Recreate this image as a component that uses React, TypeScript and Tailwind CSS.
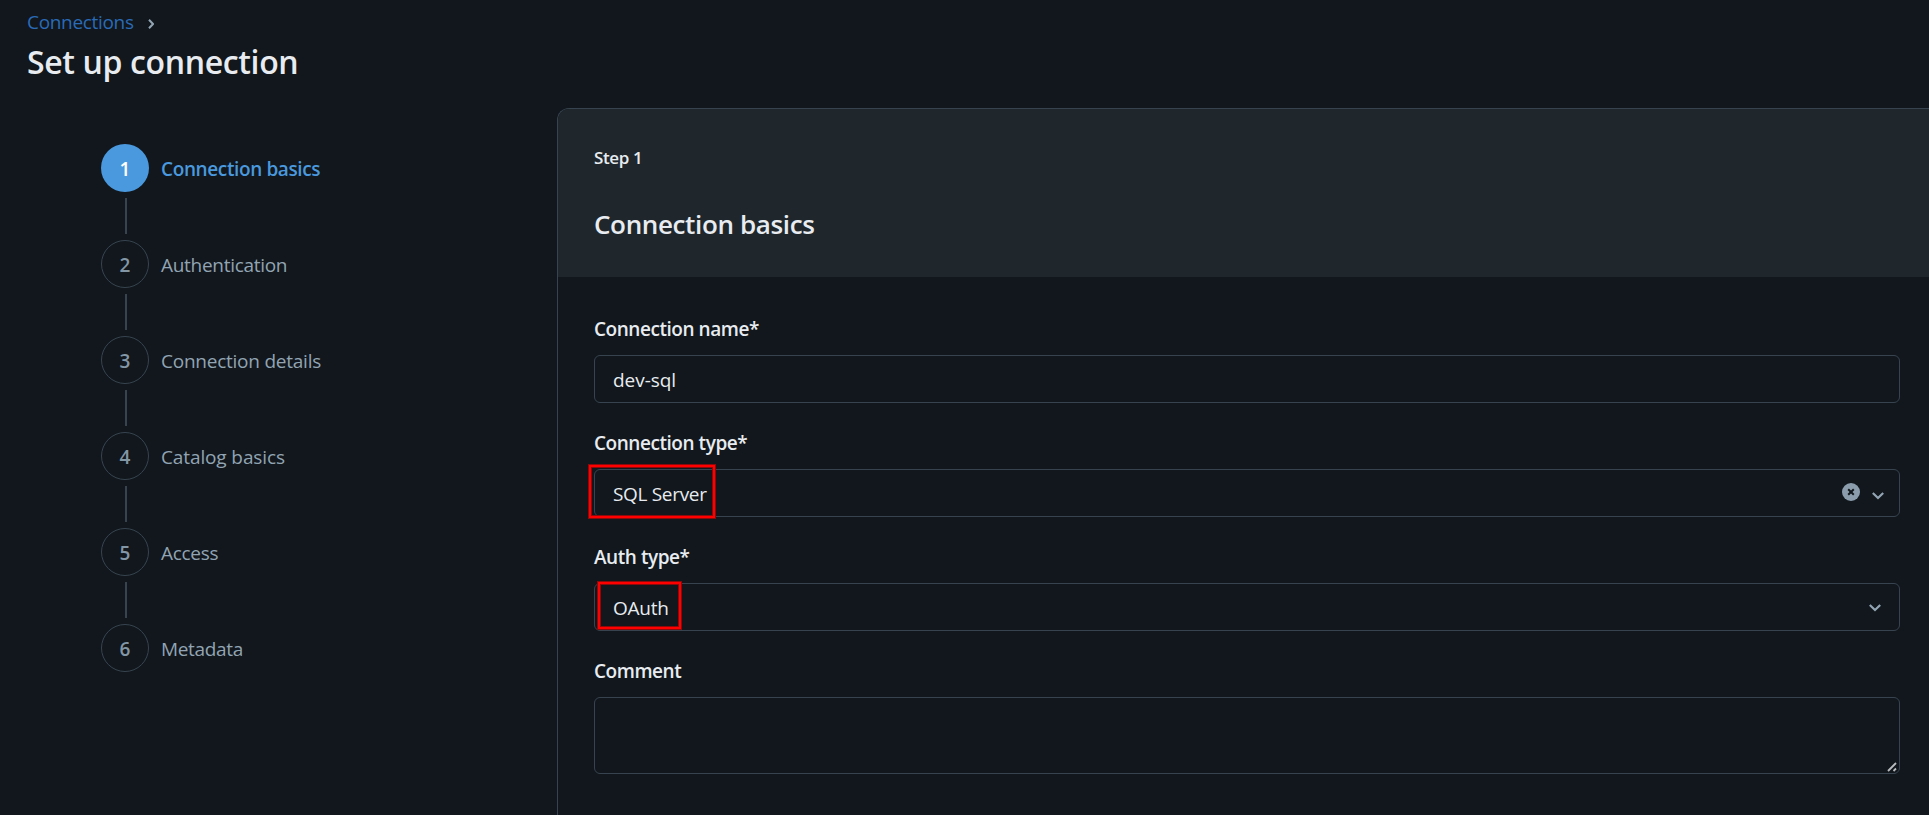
const steps = [
  { label: 'Connection basics', cls: 'tracking-[-0.38px]' },
  { label: 'Authentication', cls: 'tracking-[-0.29px]' },
  { label: 'Connection details', cls: 'tracking-[-0.24px]' },
  { label: 'Catalog basics', cls: 'tracking-[-0.12px]' },
  { label: 'Access', cls: 'tracking-[-0.3px]' },
  { label: 'Metadata', cls: 'tracking-[-0.32px]' },
];

function Chevron({ className }: { className: string }) {
  return (
    <svg className={className} viewBox="0 0 12 8" fill="none" stroke="#92a4b3" strokeWidth="2.2">
      <path d="M0.8 1 L6 6 L11.2 1" />
    </svg>
  );
}

function Stepper() {
  return (
    <nav className="flex w-[557px] shrink-0 flex-col pt-9 pl-[101px]">
      {steps.map((s, i) => (
        <div key={s.label} className="flex flex-col">
          <div className="flex h-12 items-center gap-3">
            <span
              className={
                i === 0
                  ? 'flex size-12 items-center justify-center rounded-full bg-[#4a99de] pt-[3px] text-[19px] font-semibold text-white'
                  : 'flex size-12 items-center justify-center rounded-full border border-[#37444f] pt-[3px] text-[19px] font-semibold text-[#8396a5]'
              }
            >
              {i + 1}
            </span>
            <span
              className={
                (i === 0 ? 'pt-[3px] text-[19px] font-semibold text-[#4a99de] ' : 'pt-[3px] text-[19px] text-[#92a4b3] ') + s.cls
              }
            >
              {s.label}
            </span>
          </div>
          {i < steps.length - 1 && <div className="my-1.5 ml-6 h-9 w-0.5 bg-[#37444f]" />}
        </div>
      ))}
    </nav>
  );
}

function Label({ children }: { children: string }) {
  return <div className="h-[39px] text-[19px] leading-[26px] font-semibold tracking-[-0.45px]">{children}</div>;
}

const box = 'relative flex h-12 items-center rounded-md border border-[#37444f] pl-[18px] pt-0.5 text-[19px]';
const marker = 'absolute border-2 border-[#fe0000] shadow-[0_0_0_1px_#8a0a0c,inset_0_0_0_1px_#8a0a0c]';

export default function App() {
  return (
    <div className="flex h-[815px] w-full flex-col overflow-hidden bg-[#11171c] font-['Open_Sans',sans-serif] text-[#e8ecf0]">
      <header className="h-[108px] pl-[27px]">
        <div className="flex h-11 items-center gap-3.5">
          <a className="text-[19px] tracking-[-0.32px] text-[#2a6bb8]">Connections</a>
          <svg className="mt-1 h-2.5 w-1.5" viewBox="0 0 6 10" fill="none" stroke="#92a4b3" strokeWidth="2">
            <path d="M1 0.8 L5 5 L1 9.2" />
          </svg>
        </div>
        <h1 className="text-[32px] leading-9 font-semibold tracking-[-0.36px]">Set up connection</h1>
      </header>
      <div className="flex flex-1">
        <Stepper />
        <main className="flex-1 overflow-hidden rounded-tl-xl border-t border-l border-[#37444f]">
          <div className="h-[168px] bg-[#1f272d] pt-9 pl-9">
            <div className="text-[17px] leading-[26px] font-semibold tracking-[-0.35px]">Step 1</div>
            <h2 className="mt-[33px] text-[26px] leading-[40px] font-semibold tracking-[-0.36px]">Connection basics</h2>
          </div>
          <div className="flex flex-col gap-[27px] pt-[39px] pr-[29px] pl-9">
            <div>
              <Label>Connection name*</Label>
              <div className={box + ' tracking-[-0.05px]'}>dev-sql</div>
            </div>
            <div>
              <Label>Connection type*</Label>
              <div className={box + ' tracking-[-0.32px]'}>
                SQL Server
                <div className={marker + ' -top-[5px] -left-[6px] h-[53px] w-[126px]'} />
                <svg className="mr-3 mb-1 ml-auto size-[18px]" viewBox="0 0 18 18">
                  <circle cx="9" cy="9" r="9" fill="#8b9dac" />
                  <path d="M6.2 6.2 L11.8 11.8 M11.8 6.2 L6.2 11.8" stroke="#11171c" strokeWidth="2" />
                </svg>
                <Chevron className="mr-[15px] mt-1 h-2 w-3" />
              </div>
            </div>
            <div>
              <Label>Auth type*</Label>
              <div className={box + ' tracking-[-0.25px]'}>
                OAuth
                <div className={marker + ' -top-[2px] left-[3px] h-[47px] w-[83px]'} />
                <Chevron className="mr-[18px] ml-auto h-2 w-3" />
              </div>
            </div>
            <div>
              <Label>Comment</Label>
              <div className="flex h-[77px] items-end justify-end rounded-md border border-[#37444f] p-px pr-0.5">
                <svg className="size-[10px]" viewBox="0 0 10 10" stroke="#b9bcbe" strokeWidth="1.8">
                  <path d="M1 9 L9 1 M6.5 9 L9 6.5" />
                </svg>
              </div>
            </div>
          </div>
        </main>
      </div>
    </div>
  );
}
